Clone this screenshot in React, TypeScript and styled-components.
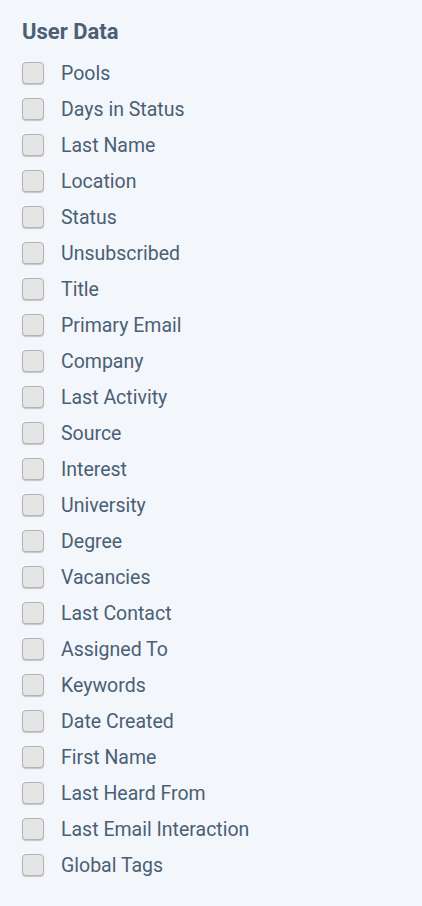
import React from "react"
import styled, { createGlobalStyle } from "styled-components"

const fields = [
  "Pools",
  "Days in Status",
  "Last Name",
  "Location",
  "Status",
  "Unsubscribed",
  "Title",
  "Primary Email",
  "Company",
  "Last Activity",
  "Source",
  "Interest",
  "University",
  "Degree",
  "Vacancies",
  "Last Contact",
  "Assigned To",
  "Keywords",
  "Date Created",
  "First Name",
  "Last Heard From",
  "Last Email Interaction",
  "Global Tags",
]

export default function App() {
  return (
    <>
      <GlobalStyle />
      <Panel>
        <Heading>User Data</Heading>
        <FieldList>
          {fields.map((name) => (
            <FieldRow key={name}>
              <Box type="checkbox" />
              <span>{name}</span>
            </FieldRow>
          ))}
        </FieldList>
      </Panel>
    </>
  )
}

const GlobalStyle = createGlobalStyle`
  html, body {
    margin: 0;
    padding: 0;
    background: #f3f6fb;
  }
  body {
    font-family: Roboto, "Liberation Sans", sans-serif;
  }
`

const Panel = styled.div`
  min-height: 906px;
  box-sizing: border-box;
  padding: 20px 22px;
  background: #f3f6fb;
  color: #4b5f74;
`

const Heading = styled.h2`
  margin: 0 0 11px;
  font-size: 22px;
  line-height: 24px;
  font-weight: 700;
  color: #4b5f74;
`

const FieldList = styled.ul`
  list-style: none;
  margin: 0;
  padding: 0;
`

const FieldRow = styled.li`
  display: flex;
  align-items: center;
  gap: 17px;
  height: 36px;
  font-size: 19.5px;
  cursor: pointer;
`

const Box = styled.input`
  appearance: none;
  margin: 0;
  width: 22px;
  height: 22px;
  box-sizing: border-box;
  border: 1.5px solid #b4b4b4;
  border-radius: 4px;
  background: #e5e5e5;
  box-shadow: 0 1px 1px rgba(0, 0, 0, 0.2);
`
